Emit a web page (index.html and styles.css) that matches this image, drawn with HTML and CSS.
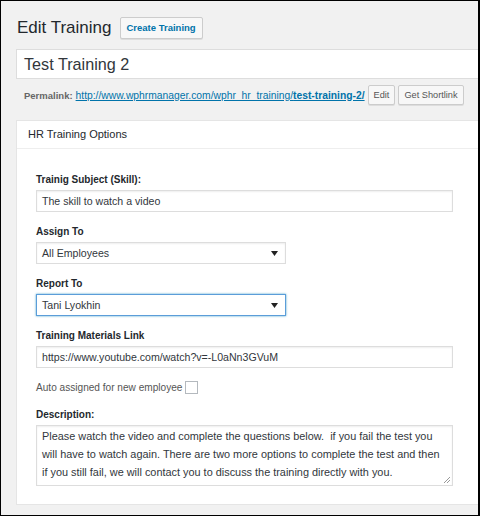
FILE: index.html
```html
<!DOCTYPE html>
<html>
<head>
<meta charset="utf-8">
<link rel="stylesheet" href="styles.css">
</head>
<body>
<div class="frame">
  <div class="head">
    <h1 class="title">Edit Training</h1>
    <span class="btn-create">Create Training</span>
  </div>
  <div class="title-input">Test Training 2</div>
  <div class="permalink">
    <span class="perm-label">Permalink:</span>
    <a class="perm-link">http://www.wphrmanager.com/wphr_hr_training/<b>test-training-2/</b></a>
    <span class="small-btn">Edit</span>
    <span class="small-btn">Get Shortlink</span>
  </div>
  <div class="panel">
    <div class="panel-head">HR Training Options</div>
    <div class="panel-body">
      <div class="field">
        <div class="label">Trainig Subject (Skill):</div>
        <div class="input wide">The skill to watch a video</div>
      </div>
      <div class="field">
        <div class="label">Assign To</div>
        <div class="input select">All Employees<svg class="arrow" width="7" height="5" viewBox="0 0 7 5"><path d="M0 0H7L3.5 5Z" fill="#222"/></svg></div>
      </div>
      <div class="field">
        <div class="label">Report To</div>
        <div class="input select focus">Tani Lyokhin<svg class="arrow" width="7" height="5" viewBox="0 0 7 5"><path d="M0 0H7L3.5 5Z" fill="#222"/></svg></div>
      </div>
      <div class="field">
        <div class="label">Training Materials Link</div>
        <div class="input wide">https://www.youtube.com/watch?v=-L0aNn3GVuM</div>
      </div>
      <div class="check-row">
        <span>Auto assigned for new employee</span><span class="checkbox"></span>
      </div>
      <div class="field">
        <div class="label">Description:</div>
        <div class="textarea">Please watch the video and complete the questions below.&nbsp; if you fail the test you will have to watch again. There are two more options to complete the test and then if you still fail, we will contact you to discuss the training directly with you.<svg class="grip" width="8" height="8" viewBox="0 0 8 8"><path d="M7 1L1 7M7 4L4 7" stroke="#999" stroke-width="1"/></svg></div>
      </div>
    </div>
  </div>
</div>
</body>
</html>
```
FILE: styles.css
```css
html, body {
  margin: 0;
  padding: 0;
}
body {
  font-family: "Liberation Sans", Arial, sans-serif;
  color: #444;
}
.frame {
  width: 480px;
  height: 516px;
  box-sizing: border-box;
  border: 1px solid #000;
  border-right-width: 2px;
  background: #f1f1f1;
  padding: 15px 0 0 15px;
  overflow: hidden;
}
.head {
  display: flex;
  align-items: center;
  height: 23px;
}
.title {
  margin: 0 0 0 1px;
  font-size: 17px;
  font-weight: 400;
  color: #23282d;
  line-height: 23px;
}
.btn-create {
  margin-left: 8px;
  height: 22px;
  box-sizing: border-box;
  border: 1px solid #ccc;
  border-radius: 2px;
  background: #f7f7f7;
  color: #0073aa;
  font-size: 9.5px;
  font-weight: 700;
  line-height: 20px;
  padding: 0 6px;
  box-shadow: 0 1px 0 #ddd;
}
.title-input {
  margin-top: 10px;
  height: 30px;
  box-sizing: border-box;
  border: 1px solid #ddd;
  border-right: none;
  background: #fff;
  font-size: 16.2px;
  line-height: 28px;
  padding-left: 7px;
  color: #32373c;
}
.permalink {
  margin-top: 6px;
  display: flex;
  align-items: center;
  height: 20px;
  padding-left: 8px;
  font-size: 10.3px;
  white-space: nowrap;
}
.perm-label {
  font-weight: 700;
  font-size: 9.5px;
  color: #666;
  margin-right: 3px;
}
.perm-link {
  color: #0073aa;
  text-decoration: underline;
  margin-right: 0;
}
.perm-link b {
  font-weight: 700;
}
.small-btn {
  height: 20px;
  box-sizing: border-box;
  border: 1px solid #ccc;
  border-radius: 2px;
  background: #f7f7f7;
  color: #555;
  font-size: 9.2px;
  line-height: 18px;
  padding: 0 5px;
  margin-left: 3px;
  box-shadow: 0 1px 0 #ddd;
}
.panel {
  margin-top: 15px;
  background: #fff;
  border: 1px solid #e5e5e5;
  border-right: none;
  height: 385px;
  box-sizing: border-box;
}
.panel-head {
  height: 28px;
  box-sizing: border-box;
  border-bottom: 1px solid #eee;
  padding-left: 11px;
  font-size: 11px;
  line-height: 27px;
  color: #23282d;
}
.panel-body {
  padding: 11px 0 0 19px;
}
.field {
  margin-top: 11px;
}
.label {
  font-size: 10px;
  font-weight: 700;
  color: #23282d;
  line-height: 17px;
  margin-bottom: 2px;
}
.input {
  height: 22px;
  box-sizing: border-box;
  border: 1px solid #ddd;
  box-shadow: inset 0 1px 2px rgba(0,0,0,0.07);
  font-size: 10.6px;
  line-height: 20px;
  padding-left: 5px;
  color: #32373c;
  position: relative;
}
.wide {
  width: 417px;
}
.select {
  width: 250px;
}
.focus {
  border-color: #5b9dd9;
  box-shadow: 0 0 2px rgba(30,140,190,0.8);
}
.arrow {
  position: absolute;
  right: 7px;
  top: 8px;
}
.check-row {
  margin-top: 11px;
  height: 16px;
  display: flex;
  align-items: center;
  font-size: 10.1px;
  color: #555;
}
.checkbox {
  width: 13px;
  height: 13px;
  box-sizing: border-box;
  border: 1px solid #b4b9be;
  margin-left: 3px;
  background: #fff;
}
.textarea {
  width: 417px;
  height: 61px;
  box-sizing: border-box;
  border: 1px solid #ddd;
  box-shadow: inset 0 1px 2px rgba(0,0,0,0.07);
  font-size: 10.9px;
  line-height: 18px;
  padding: 1px 5px;
  color: #32373c;
  position: relative;
}
.grip {
  position: absolute;
  right: 1px;
  bottom: 1px;
}
```
